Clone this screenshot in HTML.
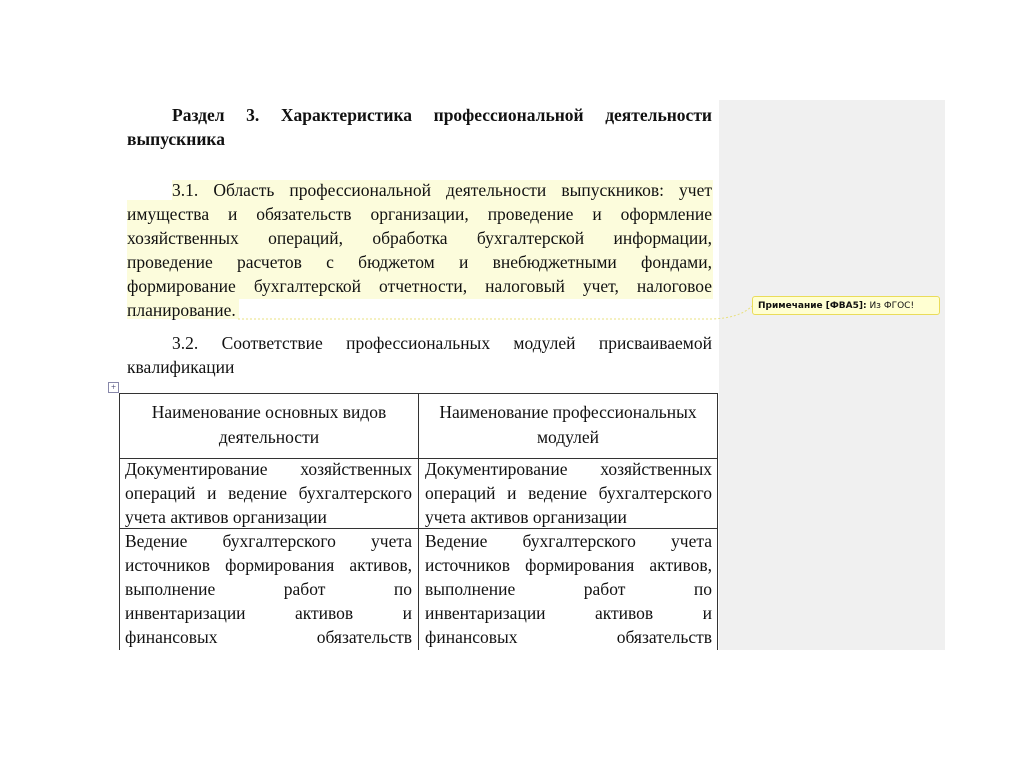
<!DOCTYPE html>
<html><head><meta charset="utf-8"><style>
body{margin:0;width:1024px;height:767px;background:#fff;position:relative;overflow:hidden;font-family:"Liberation Serif",serif;color:#111}
.l{position:absolute;font-size:17.5px;line-height:20px;white-space:nowrap}
.j{text-align:justify;text-align-last:justify;white-space:normal}
.c{text-align:center}
.b{font-weight:bold}
#gray{position:absolute;left:719px;top:100px;width:226px;height:550px;background:#f0f0f0}
.h{position:absolute;height:1px;background:#333}
.v{position:absolute;width:1px;background:#333}
</style></head><body>
<div id="gray"></div>
<div class="l j b" style="left:172px;top:105px;width:540px">Раздел 3. Характеристика профессиональной деятельности</div>
<div class="l b" style="left:127px;top:129px">выпускника</div>
<div style="position:absolute;left:172px;top:180px;width:541px;height:20px;background:#fcfcdc"></div>
<div style="position:absolute;left:127px;top:200px;width:586px;height:99px;background:#fcfcdc"></div>
<div style="position:absolute;left:127px;top:299px;width:112px;height:20px;background:#fcfcdc"></div>
<div class="l j" style="left:172px;top:180px;width:540px">3.1. Область профессиональной деятельности выпускников: учет</div>
<div class="l j" style="left:127px;top:204px;width:585px">имущества и обязательств организации, проведение и оформление</div>
<div class="l j" style="left:127px;top:228px;width:585px">хозяйственных операций, обработка бухгалтерской информации,</div>
<div class="l j" style="left:127px;top:252px;width:585px">проведение расчетов с бюджетом и внебюджетными фондами,</div>
<div class="l j" style="left:127px;top:276px;width:585px">формирование бухгалтерской отчетности, налоговый учет, налоговое</div>
<div class="l" style="left:127px;top:300px">планирование.</div>
<svg style="position:absolute;left:0;top:0" width="1024" height="767"><path d="M238 319 L712 319 Q740 318 752 306" stroke="#e8e080" stroke-dasharray="2,2" fill="none"/></svg>
<div style="position:absolute;left:752px;top:296px;width:188px;height:19px;border:1px solid #eadc5a;border-radius:3px;background:#ffffd2;font-family:'DejaVu Sans',sans-serif;font-size:9px;line-height:19px;padding-left:5px;box-sizing:border-box"><b>Примечание [ФВА5]:</b> Из ФГОС!</div>
<div class="l j" style="left:172px;top:333px;width:540px">3.2. Соответствие профессиональных модулей присваиваемой</div>
<div class="l" style="left:127px;top:357px">квалификации</div>
<div style="position:absolute;left:108px;top:382px;width:9px;height:9px;border:1px solid #88a;font-size:9px;line-height:9px;text-align:center;color:#336">+</div>
<div class="h" style="left:119px;top:393px;width:599px"></div>
<div class="h" style="left:119px;top:458px;width:599px"></div>
<div class="h" style="left:119px;top:528px;width:599px"></div>
<div class="v" style="left:119px;top:393px;height:257px"></div>
<div class="v" style="left:418px;top:393px;height:257px"></div>
<div class="v" style="left:717px;top:393px;height:257px"></div>

<div class="l c" style="left:120px;top:402px;width:298px">Наименование основных видов</div>
<div class="l c" style="left:120px;top:427px;width:298px">деятельности</div>
<div class="l c" style="left:419px;top:402px;width:298px">Наименование профессиональных</div>
<div class="l c" style="left:419px;top:427px;width:298px">модулей</div>

<div class="l j" style="left:125px;top:459px;width:287px">Документирование хозяйственных</div>
<div class="l j" style="left:125px;top:483px;width:287px">операций и ведение бухгалтерского</div>
<div class="l" style="left:125px;top:507px">учета активов организации</div>
<div class="l j" style="left:425px;top:459px;width:287px">Документирование хозяйственных</div>
<div class="l j" style="left:425px;top:483px;width:287px">операций и ведение бухгалтерского</div>
<div class="l" style="left:425px;top:507px">учета активов организации</div>

<div class="l j" style="left:125px;top:531px;width:287px">Ведение бухгалтерского учета</div>
<div class="l j" style="left:125px;top:555px;width:287px">источников формирования активов,</div>
<div class="l j" style="left:125px;top:579px;width:287px">выполнение работ по</div>
<div class="l j" style="left:125px;top:603px;width:287px">инвентаризации активов и</div>
<div class="l j" style="left:125px;top:627px;width:287px">финансовых обязательств</div>
<div class="l j" style="left:425px;top:531px;width:287px">Ведение бухгалтерского учета</div>
<div class="l j" style="left:425px;top:555px;width:287px">источников формирования активов,</div>
<div class="l j" style="left:425px;top:579px;width:287px">выполнение работ по</div>
<div class="l j" style="left:425px;top:603px;width:287px">инвентаризации активов и</div>
<div class="l j" style="left:425px;top:627px;width:287px">финансовых обязательств</div>
<div style="position:absolute;left:0;top:650px;width:1024px;height:117px;background:#fff"></div>
</body></html>
